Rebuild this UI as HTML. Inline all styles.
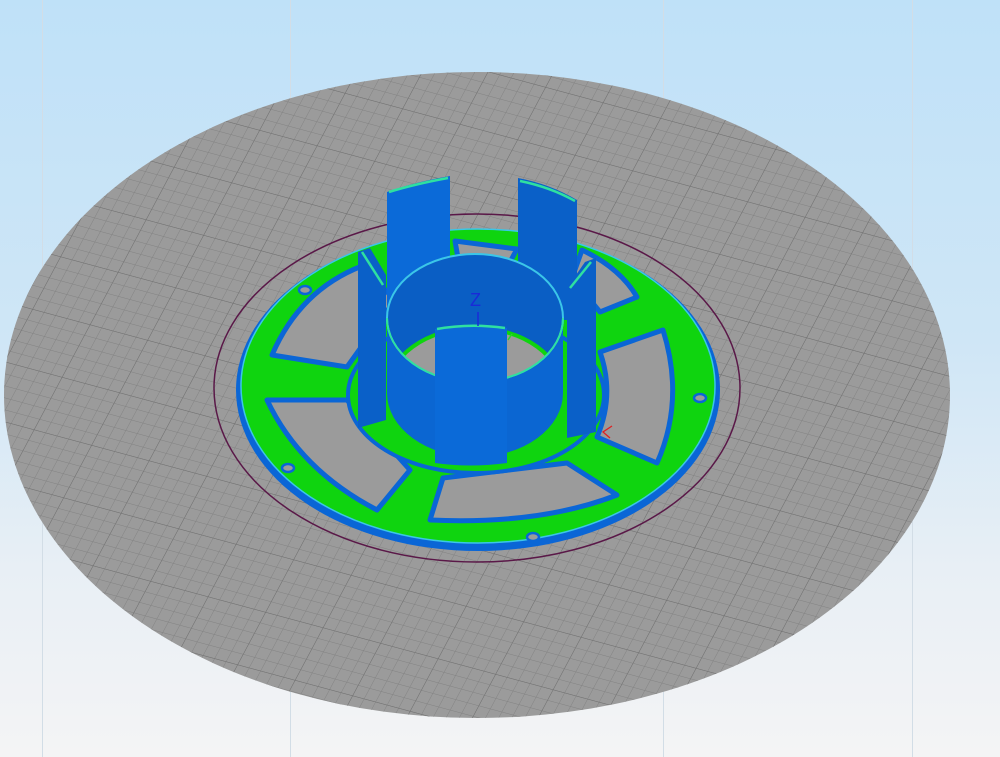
<!DOCTYPE html>
<html><head><meta charset="utf-8"><style>
html,body{margin:0;padding:0;width:1000px;height:757px;overflow:hidden}
body{background:linear-gradient(#bfe1f8 0%,#cfe6f6 45%,#e8eff5 75%,#f4f4f5 100%);font-family:"Liberation Sans",sans-serif}
svg{position:absolute;left:0;top:0}
</style></head><body>
<svg width="1000" height="757" viewBox="0 0 1000 757">
<defs>
<pattern id="g1" patternUnits="userSpaceOnUse" width="10" height="10" patternTransform="matrix(1.15 0.31 -0.56 1.05 0 0)">
<path d="M0 0H10M0 0V10" stroke="#828282" stroke-width="0.8" fill="none"/>
</pattern>
<pattern id="g2" patternUnits="userSpaceOnUse" width="50" height="50" patternTransform="matrix(1.15 0.31 -0.56 1.05 0 0)">
<path d="M0 0H50M0 0V50" stroke="#707070" stroke-width="0.8" fill="none"/>
</pattern>
<clipPath id="topEl"><ellipse cx="475" cy="318" rx="88" ry="64"/></clipPath>
</defs>
<g stroke="#d2dde6" stroke-width="1">
<line x1="42.5" y1="0" x2="42.5" y2="757"/><line x1="290.5" y1="0" x2="290.5" y2="757"/>
<line x1="663.5" y1="0" x2="663.5" y2="757"/><line x1="912.5" y1="0" x2="912.5" y2="757"/>
</g>
<ellipse cx="477" cy="395" rx="473" ry="323" fill="#9b9b9b"/>
<ellipse cx="477" cy="395" rx="473" ry="323" fill="url(#g1)"/>
<ellipse cx="477" cy="395" rx="473" ry="323" fill="url(#g2)"/>
<ellipse cx="477" cy="388" rx="263" ry="174" fill="none" stroke="#5a1848" stroke-width="1.5"/>
<!-- ring -->
<ellipse cx="478" cy="390" rx="242" ry="161" fill="#0a66d6"/>
<ellipse cx="478" cy="386" rx="237" ry="157" fill="#0fd40f" stroke="#3bc6e8" stroke-width="1.5"/>
<g fill="#9b9b9b" stroke="#0a66d6" stroke-width="5" stroke-linejoin="round">
<path d="M272 355Q300 290 362 266L395 300L347 367Z"/>
<path d="M267 400L347 400L410 470L377 510Q300 470 267 400Z"/>
<path d="M443 478L567 463L617 495Q540 525 430 520Z"/>
<path d="M600 352L663 330Q685 400 657 463L597 437Q615 395 600 352Z"/>
<path d="M582 250Q620 268 637 297L600 312L572 278Z"/>
<path d="M455 241L517 249L510 262L458 258Z"/>
</g>
<g fill="#9b9b9b" stroke="#0a66d6" stroke-width="2.5">
<ellipse cx="305" cy="290" rx="6" ry="4"/><ellipse cx="700" cy="398" rx="6" ry="4"/>
<ellipse cx="288" cy="468" rx="6" ry="4"/><ellipse cx="533" cy="537" rx="6" ry="4"/>
</g>
<!-- hub base ring -->
<ellipse cx="476" cy="395" rx="128" ry="78" fill="#0fd40f" stroke="#0a66d6" stroke-width="4"/>
<!-- back towers -->
<path d="M387 192Q415 182 450 176L450 320L387 320Z" fill="#0b6ad8"/>
<path d="M389 192Q415 184 448 178" stroke="#2fe0a0" stroke-width="2.5" fill="none"/>
<path d="M518 178Q550 184 577 200L577 320L518 320Z" fill="#0a60c8"/>
<path d="M520 181Q550 187 575 201" stroke="#2fe0a0" stroke-width="2.5" fill="none"/>
<!-- hub -->
<path d="M387 318L387 393A88 64 0 0 0 563 393L563 318Z" fill="#0b66d2"/>
<ellipse cx="475" cy="318" rx="88" ry="64" fill="#0a5ec4" stroke="#3bc6e8" stroke-width="2"/>
<ellipse cx="475" cy="392" rx="88" ry="64" fill="#9b9b9b" stroke="#0fd40f" stroke-width="4" clip-path="url(#topEl)"/>
<path d="M387 318A88 64 0 0 0 563 318" fill="none" stroke="#2fe0a0" stroke-width="2"/>
<!-- side towers -->
<path d="M358 252L370 248L386 275L386 420L358 428Z" fill="#0a60c8"/>
<path d="M362 252L383 285" stroke="#2fe0a0" stroke-width="2.5"/>
<path d="M567 288L585 262L596 258L596 432L567 438Z" fill="#0a60c8"/>
<path d="M570 288L591 262" stroke="#2fe0a0" stroke-width="2.5"/>
<!-- front tower -->
<path d="M435 329Q470 322 507 328L507 463Q470 468 435 463Z" fill="#0b6ad8"/>
<path d="M437 329Q470 323 505 328" stroke="#2fe0a0" stroke-width="2.5" fill="none"/>
<!-- axes -->
<text x="470" y="306" font-size="18" fill="#1a2ad8" font-family="Liberation Sans,sans-serif">Z</text>
<line x1="478" y1="312" x2="478" y2="326" stroke="#1a2ad8" stroke-width="1.5"/>
<line x1="508" y1="340" x2="512" y2="334" stroke="#2ad82a" stroke-width="1.5"/>
<path d="M612 426L603 432L610 438" stroke="#e02020" stroke-width="1.3" fill="none"/>
</svg>
</body></html>
